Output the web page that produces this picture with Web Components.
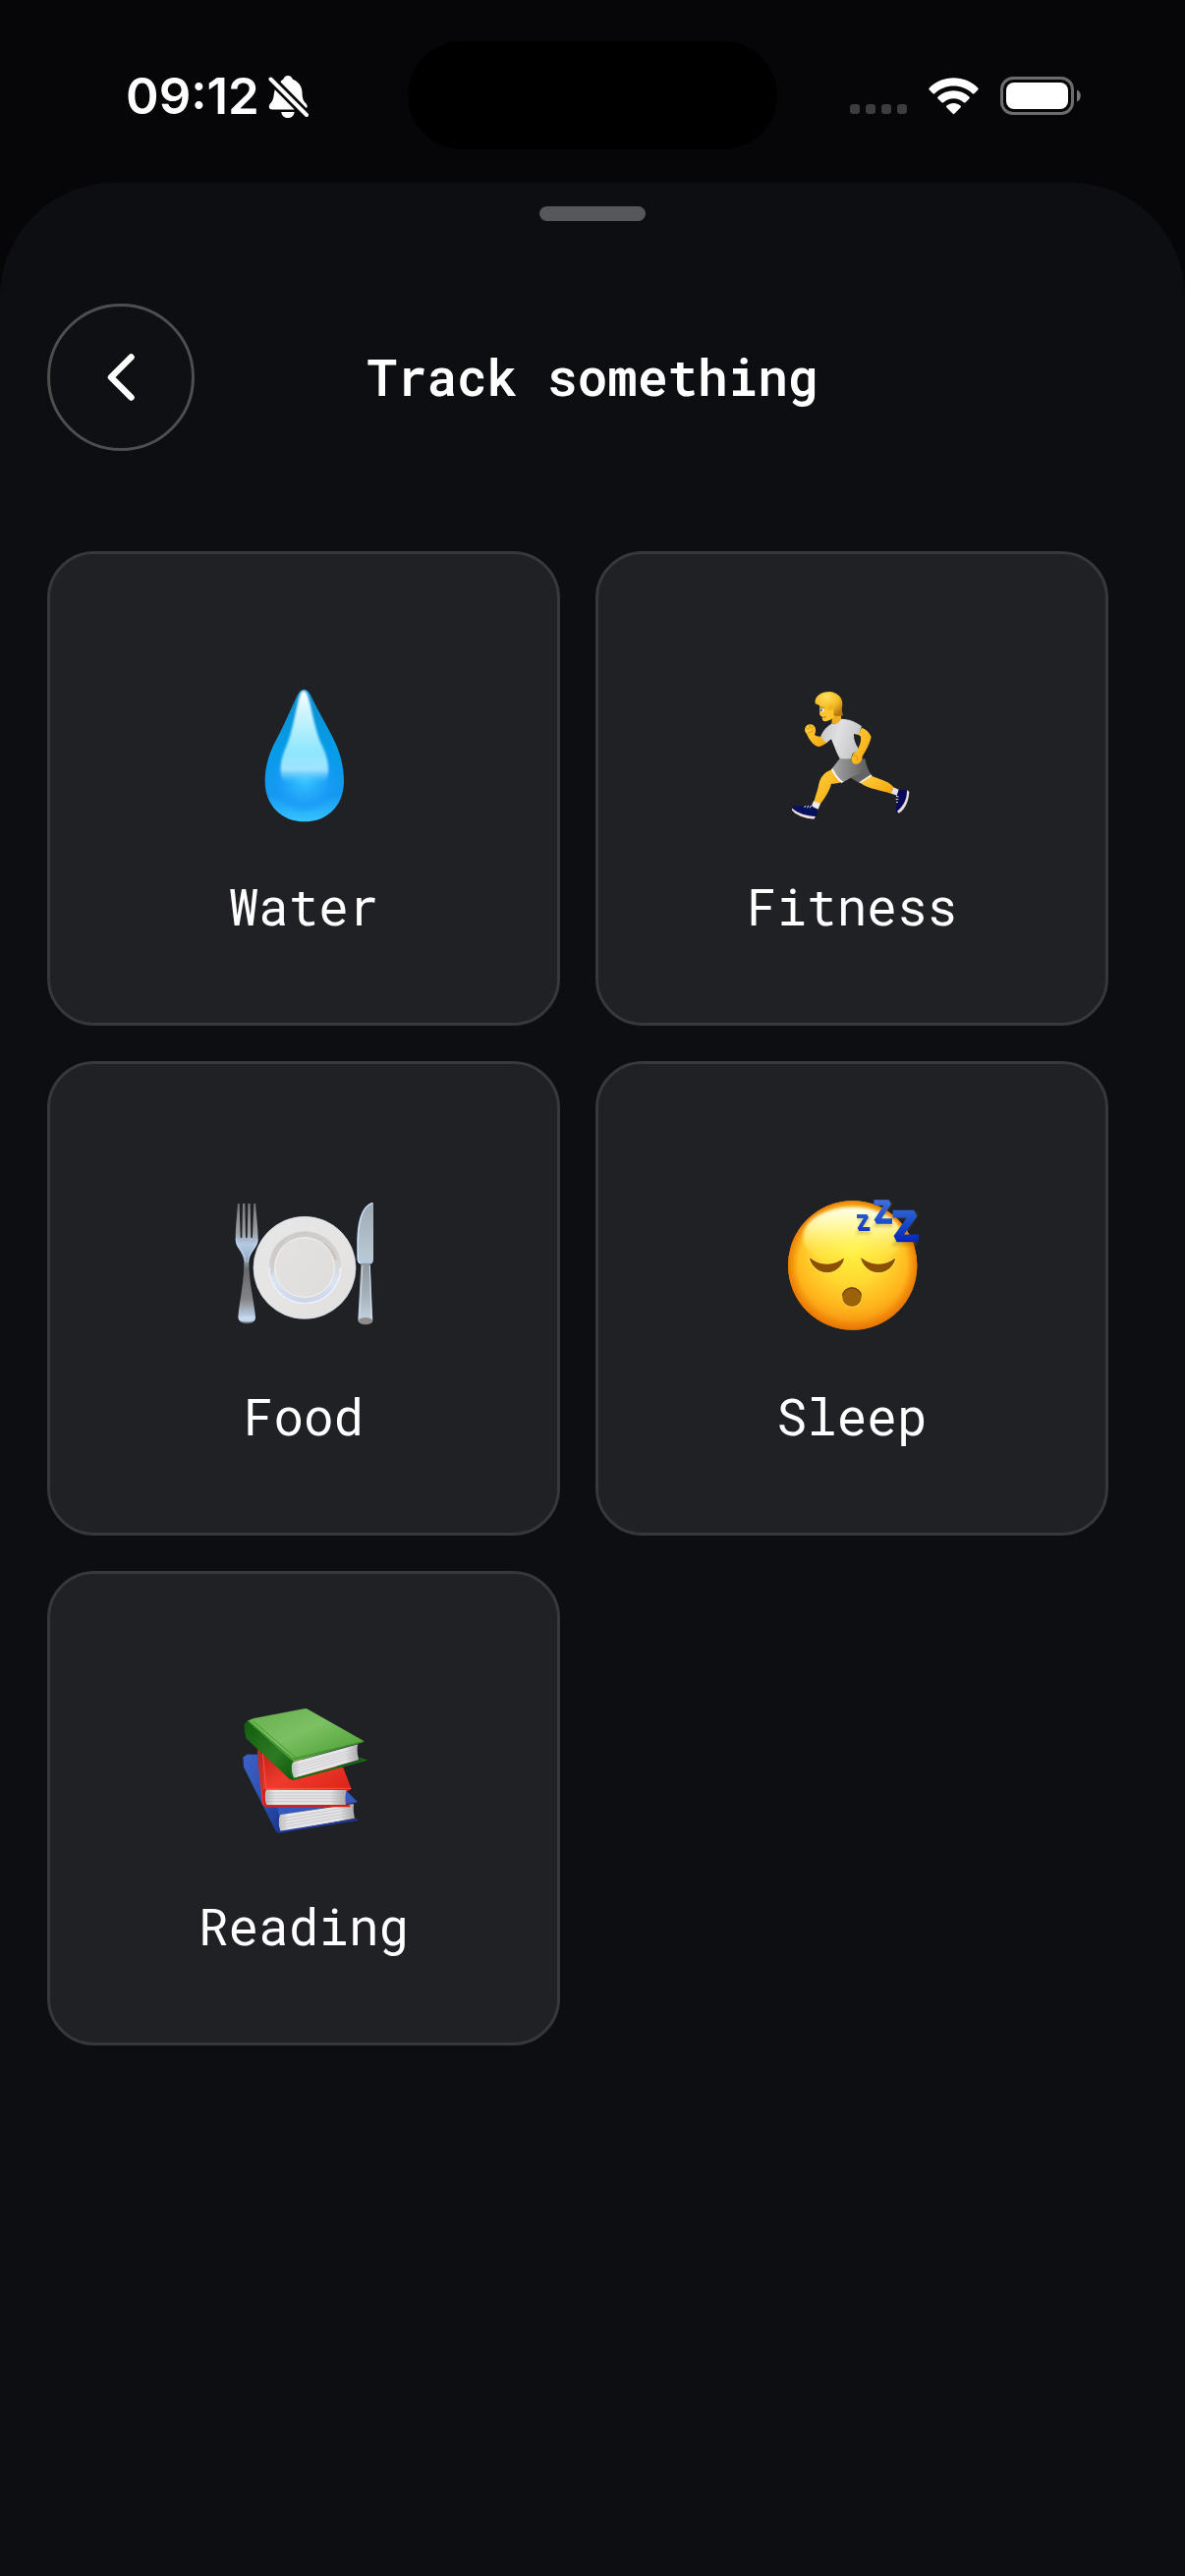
<!DOCTYPE html>
<html lang="en">
<head>
<meta charset="utf-8">
<meta name="viewport" content="width=device-width, initial-scale=1">
<title>Track something</title>
<style>
html, body { margin: 0; min-height: 100%; background: #060608; }
body { color: #fff; font-family: "Roboto Mono", "DejaVu Sans Mono", monospace; display: flex; }
</style>
</head>
<body>
<track-app></track-app>

<template id="status-bar">
<style>
:host { display: grid; grid-template-columns: 1fr 376px 1fr; align-items: center; padding: 42px 0 34px; font-family: Inter, "Liberation Sans", sans-serif; }
.left { display: flex; align-items: center; gap: 9px; padding: 2px 0 0 128px; }
time { font-size: 51px; line-height: 60px; font-weight: 600; }
.island { height: 110px; border-radius: 55px; background: #000; }
.right { display: flex; align-items: center; justify-content: flex-end; gap: 22px; padding: 2px 106px 0 0; }
svg { display: block; flex: none; }
</style>
<div class="left">
<time>09:12</time>
<svg width="42" height="44" viewBox="0 0 42 44" fill="#fff" aria-hidden="true">
<path d="M12.500 7.500C13 6 14 5.200 15.200 4.700C16.500 2 18 1 20 1C22.500 1 24 2.500 25 4.700C31 7 34.300 12 34.500 18C34.700 24 35.500 26.500 38 29C40.300 31.300 40 33.500 38.700 34Z"/>
<path d="M6.700 15.300L26.700 35.500H4C.5 35.500 0 32 2 29.500C5 26.500 5.500 23 5.700 20.500Z"/>
<path d="M13.300 38H26.500C26 46 14 46 13.300 38Z"/>
<path d="M2.500 4.500L39 41" stroke="#fff" stroke-width="4" stroke-linecap="round"/>
</svg>
</div>
<div class="island"></div>
<div class="right">
<svg width="58" height="38" viewBox="0 0 58 38" fill="#3c3c3d" aria-hidden="true"><rect y="27" width="10" height="10" rx="3"/><rect x="16" y="27" width="10" height="10" rx="3"/><rect x="32" y="27" width="10" height="10" rx="3"/><rect x="48" y="27" width="10" height="10" rx="3"/></svg>
<svg width="51" height="38" viewBox="0 0 51 38" fill="#fff" aria-hidden="true">
<path d="M.8 10.500C14-3.200 37-3.200 50.200 10.500C50.800 11.200 50.800 11.900 50.200 12.500L46.500 16.200C46 16.700 45.300 16.700 44.700 16.200C34 6 17 6 6.300 16.200C5.700 16.700 5 16.700 4.500 16.200L.8 12.500C.2 11.900 .2 11.200 .8 10.500Z"/>
<path d="M9.600 19.600C18.500 11.200 32.500 11.200 41.400 19.600C42 20.200 42 20.900 41.400 21.500L37.600 25.200C37 25.700 36.300 25.700 35.700 25.200C30 19.900 21 19.900 15.300 25.200C14.700 25.700 14 25.700 13.400 25.200L9.600 21.500C9 20.900 9 20.200 9.600 19.600Z"/>
<path d="M18.500 28.600C22.500 25.100 28.500 25.100 32.500 28.600C33.100 29.200 33.100 29.900 32.500 30.500L26.500 36.600C25.800 37.300 25.200 37.300 24.500 36.600L18.500 30.500C17.900 29.900 17.900 29.200 18.500 28.600Z"/>
</svg>
<svg width="82" height="40" viewBox="0 0 82 40" aria-hidden="true"><rect x="1.500" y="1.500" width="72" height="36" rx="11.500" fill="none" stroke="#6c6c6d" stroke-width="3"/><rect x="6" y="6" width="63" height="27" rx="8" fill="#fff"/><path d="M78 13.500C83 15 83 24 78 25.500Z" fill="#77777a"/></svg>
</div>
</template>

<template id="sheet-header">
<style>
:host { display: grid; grid-template-columns: 150px 1fr 150px; align-items: center; padding: 84px 48px 102px; }
button { width: 150px; height: 150px; padding: 0; border: 3px solid #4d4e50; border-radius: 50%; background: #0f1013; color: #fff; display: flex; align-items: center; justify-content: center; }
h1 { margin: 0; text-align: center; font-size: 51px; line-height: 60px; font-weight: 600; }
</style>
<button type="button" aria-label="Back"><svg width="48" height="60" viewBox="0 0 48 60" fill="none" stroke="currentColor" stroke-width="6.500" stroke-linecap="round" stroke-linejoin="round" aria-hidden="true"><path d="M34.500 9.500L14 30L34.500 50.500"/></svg></button>
<h1><slot></slot></h1>
</template>

<template id="track-tile">
<style>
:host { display: block; }
button { box-sizing: border-box; width: 100%; padding: 132px 24px 88px; border: 3px solid #37383b; border-radius: 48px; background: #202124; color: #fff; font: inherit; font-size: 51px; line-height: 60px; display: flex; flex-direction: column; align-items: center; gap: 53px; }
::slotted(svg) { display: block; width: 144px; height: 144px; overflow: visible; }
</style>
<button type="button"><slot name="icon"></slot><span><slot></slot></span></button>
</template>

<template id="track-app">
<style>
:host { display: flex; flex-direction: column; flex: 1; min-height: 100vh; background: #060608; }
main { flex: 1; background: #0d0e12; border-radius: 116px 116px 0 0; padding-top: 24px; }
.grabber { width: 108px; height: 15px; border-radius: 8px; background: #565759; margin: 0 auto; }
.grid { display: grid; grid-template-columns: 1fr 1fr; gap: 36px; padding: 0 78px 48px 48px; }
</style>
<status-bar></status-bar>
<main>
<div class="grabber"></div>
<sheet-header>Track something</sheet-header>
<div class="grid">
<track-tile>
<svg slot="icon" viewBox="111 78 432 432" aria-hidden="true">
<defs>
<linearGradient id="d1" x1="0" y1="0" x2="0" y2="1"><stop offset="0" stop-color="#0b8ed0"/><stop offset=".45" stop-color="#069ce8"/><stop offset=".8" stop-color="#1499f2"/><stop offset="1" stop-color="#38c4ff"/></linearGradient>
<radialGradient id="d2" gradientUnits="userSpaceOnUse" cx="330" cy="370" r="130"><stop offset="0" stop-color="#38c8ff"/><stop offset=".6" stop-color="#1a9cf8" stop-opacity=".8"/><stop offset=".8" stop-color="#1499f2" stop-opacity="0"/></radialGradient>
<linearGradient id="d3" x1="0" y1="0" x2="0" y2="1"><stop offset="0" stop-color="#fff"/><stop offset=".2" stop-color="#d4f6fe"/><stop offset=".65" stop-color="#8ee6fd"/><stop offset=".85" stop-color="#9fe3ff"/><stop offset="1" stop-color="#4cc5fd" stop-opacity="0"/></linearGradient>
<filter id="db" x="-20%" y="-20%" width="140%" height="140%"><feGaussianBlur stdDeviation="3"/></filter>
</defs>
<path d="M328 96C338 96 344 103 351 118C373 164 402 213 422 254C440 292 450 334 450 375C450 450 400 499 330 499C260 499 209 450 209 375C209 328 224 284 245 246C267 205 286 160 307 115C314 102 320 96 328 96Z" fill="url(#d1)"/>
<path d="M328 96C338 96 344 103 351 118C373 164 402 213 422 254C440 292 450 334 450 375C450 450 400 499 330 499C260 499 209 450 209 375C209 328 224 284 245 246C267 205 286 160 307 115C314 102 320 96 328 96Z" fill="url(#d2)"/>
<path d="M327 99C335 99 340 110 347 140C360 200 369 237 385 271C398 298 404 322 402 352C400 375 386 382 360 383H298C270 382 257 372 257 345C256 312 265 290 276 264C290 230 298 185 309 138C315 109 320 99 327 99Z" fill="url(#d3)" filter="url(#db)"/>
</svg>Water</track-tile>
<track-tile>
<svg slot="icon" viewBox="165 78 432 432" aria-hidden="true">
<defs>
<linearGradient id="r1" x1="0" y1="0" x2="1" y2="1"><stop offset="0" stop-color="#ffd23c"/><stop offset="1" stop-color="#f6a20e"/></linearGradient>
<linearGradient id="r2" x1="0" y1="0" x2="1" y2=".3"><stop offset="0" stop-color="#c4c4c8"/><stop offset=".5" stop-color="#e0e0e2"/><stop offset="1" stop-color="#c6c6c8"/></linearGradient>
<linearGradient id="r3" x1="0" y1="0" x2="1" y2="0"><stop offset="0" stop-color="#a8a8a8"/><stop offset="1" stop-color="#626262"/></linearGradient>
<radialGradient id="r4" cx=".4" cy=".2" r=".8"><stop offset="0" stop-color="#ffe05c"/><stop offset=".55" stop-color="#f5bd28"/><stop offset="1" stop-color="#b77a10"/></radialGradient>
</defs>
<path d="M438 358C464 371 487 371 508 393L502 414C475 403 433 401 407 381Z" fill="url(#r1)"/>
<path d="M508 394L524 401L519 419L501 413Z" fill="#e6dfe2"/>
<path d="M525 402C532 400 541 403 549 404C552 425 546 448 522 471C514 469 515 463 518 448C521 430 515 420 525 402Z" fill="#07085a"/>
<path d="M549 403L556 407C555 436 543 462 524 473L519 467C540 451 549 430 549 403Z" fill="#e7dcdc"/>
<path d="M516 421L524 423M515 430L523 431M516 439L522 440" stroke="#ddd" stroke-width="3"/>
<path d="M390 307L421 307C425 327 430 343 441 357L405 382L375 364Z" fill="#646464"/>
<path d="M441 357L405 380" stroke="#f4f4f4" stroke-width="5"/>
<path d="M321 340C298 346 284 364 280 385C276 407 269 422 265 438L283 447C300 425 314 402 318 383C328 383 343 381 350 377Z" fill="url(#r1)"/>
<path d="M264 436L285 444L278 461L257 452Z" fill="#f0e9eb"/>
<path d="M258 449C265 460 275 459 278 466L270 487C242 486 216 474 199 461C200 453 207 450 216 451C234 452 248 453 258 449Z" fill="#06105c"/>
<path d="M198 458C217 474 242 481 270 483L265 491C235 489 208 477 198 464Z" fill="#eddedf"/>
<path d="M236 456L240 450M245 457L248 450M253 457L256 450" stroke="#eee" stroke-width="3"/>
<path d="M344 306H410C430 324 423 344 404 353C384 359 369 370 352 380C336 369 327 353 319 338Z" fill="url(#r3)"/>
<path d="M320 338C328 355 337 369 352 379" fill="none" stroke="#f7f7f7" stroke-width="6"/>
<path d="M322 171H348V186C353 198 329 205 319 197Z" fill="#efad20"/>
<path d="M293 233C286 241 279 241 267 234C275 218 269 201 252 202C235 205 234 223 243 231C250 249 265 268 279 270C291 268 303 259 309 254Z" fill="url(#r1)"/>
<path d="M242 211C246 221 254 213 252 204C254 218 264 213 264 207M246 229C255 225 261 224 266 219" fill="none" stroke="#d18b0c" stroke-width="2.500"/>
<path d="M348 185C377 186 398 197 411 208L401 234L387 231C386 246 391 261 401 275L398 286C385 286 379 296 380 306C367 308 356 308 344 306C332 285 327 267 318 247L303 258C296 252 290 246 286 237C293 221 304 209 320 199C330 203 343 197 348 185Z" fill="url(#r2)"/>
<path d="M411 212C424 217 435 226 440 240C435 264 423 283 413 299C412 321 396 327 385 321C377 310 379 291 395 285C406 265 411 251 407 238L400 233Z" fill="url(#r1)"/>
<path d="M385 298C393 296 400 300 398 313" fill="none" stroke="#d18b0c" stroke-width="3"/>
<path d="M281 130C285 141 282 149 283 163C280 175 287 178 291 179C288 188 294 194 304 192C318 190 331 178 335 163L331 132Z" fill="#ffc52e"/>
<path d="M269 139C265 115 288 102 314 102C337 105 353 119 352 142C349 156 351 166 354 175C343 178 330 178 325 174C326 163 327 142 319 140C310 141 316 157 308 159C304 149 295 145 284 146C278 142 272 139 269 139Z" fill="url(#r4)"/>
<ellipse cx="318" cy="151" rx="6" ry="9" fill="#f1b022"/>
<ellipse cx="290" cy="158" rx="6" ry="6" fill="#fff"/><ellipse cx="288" cy="158" rx="2.500" ry="5" fill="#30498c"/>
<path d="M286 149L297 152" stroke="#99630c" stroke-width="2.500"/><path d="M292 181L302 179" stroke="#a75b18" stroke-width="2.500"/>
</svg>Fitness</track-tile>
<track-tile>
<svg slot="icon" viewBox="81 75 432 432" aria-hidden="true">
<defs>
<linearGradient id="f1" x1="0" y1="0" x2="0" y2="1"><stop offset="0" stop-color="#777"/><stop offset=".24" stop-color="#999fa5"/><stop offset=".34" stop-color="#b4c9e2"/><stop offset=".44" stop-color="#9db5ca"/><stop offset=".55" stop-color="#65686c"/><stop offset=".8" stop-color="#858585"/><stop offset=".93" stop-color="#b7cae1"/><stop offset=".97" stop-color="#c9def5"/><stop offset="1" stop-color="#5e6164"/></linearGradient>
<linearGradient id="f2" x1="0" y1="0" x2="1" y2="1"><stop offset="0" stop-color="#e5e6e8"/><stop offset=".5" stop-color="#e7e5e3"/><stop offset="1" stop-color="#dfdfdf"/></linearGradient>
<linearGradient id="f3" x1="0" y1="0" x2="0" y2="1"><stop offset="0" stop-color="#cbcbcb"/><stop offset=".4" stop-color="#d7d5d2"/><stop offset=".7" stop-color="#dae4f2"/><stop offset="1" stop-color="#cbd4e7"/></linearGradient>
<linearGradient id="f4" x1="0" y1="0" x2="0" y2="1"><stop offset="0" stop-color="#9daab5"/><stop offset=".85" stop-color="#b9c7d1"/><stop offset="1" stop-color="#b2cbe4"/></linearGradient>
<linearGradient id="f5" x1="0" y1="0" x2="0" y2="1"><stop offset="0" stop-color="#8f969c"/><stop offset=".5" stop-color="#a6afb8"/><stop offset=".9" stop-color="#c0cfdd"/><stop offset="1" stop-color="#716e6d"/></linearGradient>
<linearGradient id="f6" x1="0" y1="0" x2="1" y2=".6"><stop offset="0" stop-color="#e4e2e0"/><stop offset="1" stop-color="#dfdedd"/></linearGradient>
</defs>
<path d="M96 105H101L104 207C105 212 108 212 109 207L111 105H118L120 207C121 212 124 212 125 207L127 105H134L136 207C137 212 140 212 141 207L145 105H150C153 145 158 179 158 214C158 243 132 250 130 284C131 356 145 397 150 452C151 478 98 478 97 452C102 393 115 350 115 284C113 250 89 242 89 215C89 181 93 145 96 105Z" fill="url(#f1)"/>
<path d="M91 213C91 239 117 247 120 285M156 213C156 239 130 247 127 285" fill="none" stroke="#c6def6" stroke-width="3" opacity=".8"/>
<ellipse cx="124" cy="457" rx="23" ry="8" fill="#c4d8ef"/>
<circle cx="300" cy="301" r="156" fill="url(#f2)" stroke="#d2e1ef" stroke-width="2"/>
<circle cx="301" cy="301" r="111" fill="url(#f3)"/>
<path d="M192 301A109 109 0 0 0 410 301" fill="none" stroke="#eef4ff" stroke-width="4"/>
<path d="M197 325C188 265 211 222 250 204C228 228 210 261 209 304Z" fill="#c8c2bd" opacity=".45"/>
<path d="M360 226C382 239 394 256 400 276L390 277C382 256 372 243 353 231Z" fill="#c6b8aa" opacity=".6"/>
<circle cx="300" cy="300" r="91" fill="url(#f6)" stroke="#f3f3f2" stroke-width="3"/>
<path d="M504 102C509 101 510 103 510 108V275C510 291 500 291 485 291C470 291 461 288 461 275C458 200 458 126 504 102Z" fill="url(#f4)"/>
<path d="M508 104C474 113 463 161 463 238V277Q464 288 477 288" fill="none" stroke="#c7e0f9" stroke-width="4"/>
<path d="M472 287H500L508 461C508 479 465 479 463 461Z" fill="url(#f5)"/>
<path d="M477 294L467 459M499 294L504 459" stroke="#cadff2" stroke-width="3" fill="none"/>
<ellipse cx="486" cy="463" rx="21" ry="10" fill="#918c89"/>
</svg>Food</track-tile>
<track-tile>
<svg slot="icon" viewBox="105 75 432 432" aria-hidden="true">
<defs>
<radialGradient id="s1" gradientUnits="userSpaceOnUse" cx="323" cy="240" r="260"><stop offset="0" stop-color="#fff23c"/><stop offset=".4" stop-color="#ffda32"/><stop offset=".72" stop-color="#ffb41c"/><stop offset=".9" stop-color="#f59310"/><stop offset="1" stop-color="#d97807"/></radialGradient>
<radialGradient id="s3" gradientUnits="userSpaceOnUse" cx="323" cy="294" r="197"><stop offset=".84" stop-color="#e87a00" stop-opacity="0"/><stop offset="1" stop-color="#e87200" stop-opacity=".8"/></radialGradient>
<linearGradient id="s2" x1="0" y1="0" x2="0" y2="1"><stop offset="0" stop-color="#fffff0"/><stop offset=".35" stop-color="#fffcae" stop-opacity=".85"/><stop offset="1" stop-color="#ffef42" stop-opacity="0"/></linearGradient>
<linearGradient id="s4" gradientUnits="userSpaceOnUse" x1="0" y1="95" x2="0" y2="223"><stop offset="0" stop-color="#3e6fdc"/><stop offset=".5" stop-color="#1c4fcb"/><stop offset="1" stop-color="#0424b4"/></linearGradient>
<filter id="sb" x="-20%" y="-20%" width="140%" height="140%"><feGaussianBlur stdDeviation="4"/></filter>
</defs>
<circle cx="323" cy="294" r="197" fill="url(#s1)"/>
<circle cx="323" cy="294" r="197" fill="url(#s3)"/>
<ellipse cx="323" cy="207" rx="151" ry="91" fill="url(#s2)" filter="url(#sb)"/>
<path d="M190 273C210 332 279 331 298 276C296 270 292 272 288 276C260 294 223 292 199 274C195 270 190 270 190 273Z" fill="#8d5003" stroke="#ffe956" stroke-width="3"/>
<path d="M347 273C367 332 436 331 455 276C453 270 449 272 445 276C417 294 380 292 356 274C352 270 347 270 347 273Z" fill="#8d5003" stroke="#ffe956" stroke-width="3"/>
<circle cx="321" cy="390" r="31" fill="#9b620a" stroke="#ffd445" stroke-width="3"/>
<path d="M292 385A30 30 0 0 1 350 385" fill="none" stroke="#70410a" stroke-width="4"/>
<g fill="none" stroke="#a87500" opacity=".35" filter="url(#sb)"><path d="M339 152H369L342 194H377" stroke-width="10"/><path d="M390 108H435L395 170H445" stroke-width="12"/><path d="M447 142H510L456 227H518" stroke-width="15"/></g>
<g fill="none" stroke="url(#s4)" stroke-linejoin="bevel">
<path d="M336 144H367L343 183H376" stroke-width="12"/><path d="M388 102H434L396 159H444" stroke-width="17"/><path d="M446 137H511L458 211H525" stroke-width="23"/>
</g>
</svg>Sleep</track-tile>
<track-tile>
<svg slot="icon" viewBox="141 72 432 432" aria-hidden="true">
<defs>
<linearGradient id="b1" x1="0" y1="0" x2="1" y2="1"><stop offset="0" stop-color="#65ae4d"/><stop offset=".45" stop-color="#7cc063"/><stop offset="1" stop-color="#429a2b"/></linearGradient>
<linearGradient id="b2" x1="0" y1="0" x2="1" y2="1"><stop offset="0" stop-color="#115c0f"/><stop offset=".6" stop-color="#2d7b22"/><stop offset="1" stop-color="#0c550b"/></linearGradient>
<linearGradient id="b3" x1="0" y1="0" x2="1" y2="0"><stop offset="0" stop-color="#bcbcbe"/><stop offset=".12" stop-color="#e6e6e8"/><stop offset=".8" stop-color="#e5e5e7"/><stop offset="1" stop-color="#a8a8aa"/></linearGradient>
<linearGradient id="b4" x1="0" y1="0" x2="1" y2="1"><stop offset="0" stop-color="#b51c14"/><stop offset=".4" stop-color="#f13a2e"/><stop offset="1" stop-color="#d51b12"/></linearGradient>
<linearGradient id="b5" x1="0" y1="0" x2="1" y2="1"><stop offset="0" stop-color="#3d61c5"/><stop offset=".6" stop-color="#294cae"/><stop offset="1" stop-color="#1a3286"/></linearGradient>
</defs>
<path d="M172 236L184 227L220 227L300 400L284 469L272 462L174 266Z" fill="url(#b5)"/>
<path d="M238 382L277 389L281 414L522 373L488 338L250 350Z" fill="#3558bd"/>
<path d="M284 412L510 378Q507 397 513 422L286 464Q277 436 284 412Z" fill="url(#b3)"/>
<path d="M294 422L510 386M293 431L510 395M292 441L510 404M291 450L511 412" stroke="#aaaab0" stroke-width="1.500"/>
<path d="M281 411Q273 438 284 464L521 426" fill="none" stroke="#1f399e" stroke-width="6"/>
<path d="M217 207L238 220L478 268L503 333L485 342V377L499 387L240 388L231 379L217 248Z" fill="url(#b4)"/>
<path d="M219 216L232 334L240 381" fill="none" stroke="#a73a35" stroke-width="5"/>
<path d="M232 218L242 331H501" fill="none" stroke="#ff5141" stroke-width="3"/>
<path d="M242 335L488 336Q482 356 486 381L242 382Q236 357 242 335Z" fill="url(#b3)"/>
<path d="M246 345H483M244 354H483M243 362H483M243 371H484" stroke="#aaa9ac" stroke-width="1.500"/>
<path d="M239 333Q231 358 242 385H499" fill="none" stroke="#d91b14" stroke-width="6"/>
<path d="M176 135L186 124L328 246L321 267L326 307L314 302L181 178Q175 157 176 135Z" fill="url(#b2)"/>
<path d="M186 124Q195 121 205 117L362 87Q368 87 375 92L542 187L328 249L317 242Z" fill="url(#b1)"/>
<path d="M190 127L323 242L540 188" fill="none" stroke="#3b9428" stroke-width="4"/>
<path d="M202 125L337 240" fill="none" stroke="#479a35" stroke-width="3"/>
<path d="M323 251L523 196Q517 217 526 244L326 300Q313 273 323 251Z" fill="url(#b3)"/>
<path d="M328 262L520 209M326 270L520 217M325 279L520 224M325 288L521 232" stroke="#b5b5b8" stroke-width="1.500"/>
<path d="M320 249Q312 275 326 303L543 245L527 239" fill="none" stroke="#137010" stroke-width="6"/>
</svg>Reading</track-tile>
</div>
</main>
</template>

<script>
const define = name => customElements.define(name, class extends HTMLElement {
  constructor() {
    super();
    this.attachShadow({ mode: "open" }).append(document.getElementById(name).content.cloneNode(true));
  }
});
["status-bar", "sheet-header", "track-tile", "track-app"].forEach(define);
</script>
</body>
</html>
